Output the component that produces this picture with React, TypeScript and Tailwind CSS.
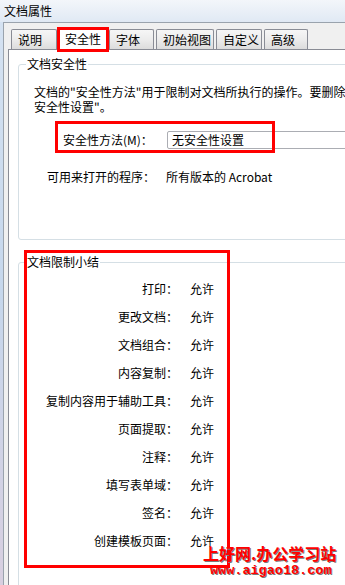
const tabs = [
  { label: "说明", w: "w-[46px]" },
  { label: "安全性", w: "w-[52px]", active: true },
  { label: "字体", w: "w-[45px]" },
  { label: "初始视图", w: "w-[58px]" },
  { label: "自定义", w: "w-[46px]" },
  { label: "高级", w: "w-[44px]" },
];

const rules = [
  "打印",
  "更改文档",
  "文档组合",
  "内容复制",
  "复制内容用于辅助工具",
  "页面提取",
  "注释",
  "填写表单域",
  "签名",
  "创建模板页面",
];

function TabStrip() {
  return (
    <div className="ml-[3px] flex h-[22px] items-end gap-[2px]">
      {tabs.map((t) =>
        t.active ? (
          <div
            key={t.label}
            className={`relative z-10 -mx-[2px] -mb-[1px] flex h-[23px] items-center rounded-t-[2px] border border-b-0 border-[#898c95] bg-white pl-[7px] ${t.w}`}
          >
            {t.label}
            <div className="absolute -bottom-[2px] -left-[1px] -right-[1px] -top-[1px] border-[3px] border-[#ff0000]" />
          </div>
        ) : (
          <div
            key={t.label}
            className={`flex h-[20px] items-center rounded-t-[2px] border border-b-0 border-[#898c95] bg-gradient-to-b from-[#f6f6f6] via-[#ececec] to-[#dcdcdc] pl-[6px] ${t.w}`}
          >
            {t.label}
          </div>
        ),
      )}
    </div>
  );
}

function SecurityGroup() {
  return (
    <fieldset className="w-[400px] rounded-[3px] border border-[#d5dfe5]">
      <legend className="ml-[7px] px-[1px] leading-[16px]">文档安全性</legend>
      <div className="pb-[54px] pl-[15px] pt-[12px]">
        <p className="whitespace-nowrap leading-[15px]">
          文档的"安全性方法"用于限制对文档所执行的操作。要删除
          <br />
          安全性设置"。
        </p>
        <div className="relative ml-[29px] mt-[17px] flex h-[18px] items-center">
          <span className="w-[104px] shrink-0">安全性方法(M)：</span>
          <div className="flex h-[18px] flex-1 items-center rounded-[2px] border border-[#abadb3] bg-white pl-[4px]">
            无安全性设置
          </div>
          <div className="absolute -top-[10px] left-[-8px] h-[32px] w-[220px] border-[3px] border-[#ff0000]" />
        </div>
        <div className="ml-[13px] mt-[20px] flex leading-[16px]">
          <span className="w-[119px] shrink-0">可用来打开的程序：</span>
          <span>所有版本的 Acrobat</span>
        </div>
      </div>
    </fieldset>
  );
}

function SummaryGroup() {
  return (
    <div className="relative mt-[14px]">
      <fieldset className="w-[400px] rounded-[3px] border border-[#d5dfe5]">
        <legend className="ml-[7px] px-[1px] leading-[16px]">文档限制小结</legend>
        <div className="pb-[40px] pt-[5px]">
          {rules.map((r) => (
            <div key={r} className="flex h-[28px] items-center">
              <span className="w-[159px] text-right">{r}：</span>
              <span className="ml-[12px]">允许</span>
            </div>
          ))}
        </div>
      </fieldset>
      <div className="absolute left-[6px] top-[-4px] h-[318px] w-[206px] border-[3px] border-[#ff0000]" />
    </div>
  );
}

export default function App() {
  return (
    <div className="relative h-[585px] w-[345px] overflow-hidden bg-gradient-to-b from-[#d6e3f2] via-[#c6d7ec] to-[#d8cfe0] font-['Noto_Sans_CJK_SC','Noto_Sans',sans-serif] text-[12px] leading-[16px] text-black">
      <div className="flex h-[22px] items-center bg-gradient-to-b from-[#f3f6fa] to-[#e0e9f4] pl-[4px]">
        文档属性
      </div>
      <div className="flex h-[563px]">
        <div className="w-[3px] shrink-0" />
        <div className="flex flex-1 flex-col border-l border-t border-[#9aa3ad] bg-[#f0f0f0] pl-[4px] pt-[4px]">
          <TabStrip />
          <div className="flex-1 border-l border-t border-[#898c95] bg-white pl-[9px] pt-[6px]">
            <SecurityGroup />
            <SummaryGroup />
          </div>
        </div>
      </div>
      <div className="absolute left-[203px] top-[543px] flex flex-col">
        <span className="text-[16px] font-bold leading-[20px] text-[#ff0000] [text-shadow:1px_1px_0_#7a7a7a]">
          上好网.办公学习站
        </span>
        <span className="ml-[7px] font-['Liberation_Mono',monospace] text-[13.5px] font-bold leading-[16px] text-[#ff0000] [text-shadow:1px_1px_0_#7a7a7a]">
          www.aigao18.com
        </span>
      </div>
    </div>
  );
}
